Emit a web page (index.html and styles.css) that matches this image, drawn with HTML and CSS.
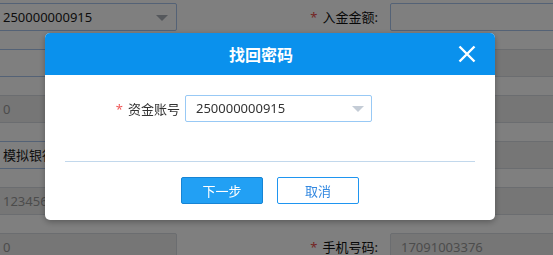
FILE: index.html
```html
<!DOCTYPE html>
<html lang="zh-CN">
<head>
<meta charset="utf-8">
<title>找回密码</title>
<link rel="stylesheet" href="styles.css">
</head>
<body>
<div class="page">
  <div class="row">
    <div class="field select">250000000915<span class="caret"></span></div>
    <div class="label"><span class="req">*</span>入金金额:</div>
    <div class="field"></div>
  </div>
  <div class="row">
    <div class="field"></div>
    <div class="label"></div>
    <div class="field disabled"></div>
  </div>
  <div class="row">
    <div class="field disabled">0</div>
    <div class="label"></div>
    <div class="field disabled"></div>
  </div>
  <div class="row">
    <div class="field dark">模拟银行</div>
    <div class="label"></div>
    <div class="field disabled"></div>
  </div>
  <div class="row">
    <div class="field disabled">1234567890</div>
    <div class="label"></div>
    <div class="field disabled"></div>
  </div>
  <div class="row">
    <div class="field disabled">0</div>
    <div class="label"><span class="req">*</span>手机号码:</div>
    <div class="field disabled">17091003376</div>
  </div>
</div>

<div class="mask">
  <div class="dialog">
    <div class="dialog-head">
      <span class="dialog-title">找回密码</span>
      <span class="close">
        <svg width="18" height="18" viewBox="0 0 18 18"><path d="M1.5 1.5 L16.5 16.5 M16.5 1.5 L1.5 16.5" stroke="#fff" stroke-width="2.4" fill="none"/></svg>
      </span>
    </div>
    <div class="dialog-body">
      <div class="form-row">
        <label class="form-label"><span class="req">*</span>资金账号</label>
        <div class="combo">250000000915<span class="combo-caret"></span></div>
      </div>
    </div>
    <div class="divider"></div>
    <div class="actions">
      <button class="btn primary">下一步</button>
      <button class="btn ghost">取消</button>
    </div>
  </div>
</div>
</body>
</html>
```

FILE: styles.css
```css
html, body {
  margin: 0;
  padding: 0;
  width: 553px;
  height: 255px;
  overflow: hidden;
  background: #fff;
  font-family: "Noto Sans", "Noto Sans CJK SC", sans-serif;
  font-size: 13px;
  color: #333;
}

.page {
  display: flex;
  flex-direction: column;
  gap: 18px;
  padding-top: 3px;
  margin-left: -8px;
}

.row {
  display: grid;
  grid-template-columns: 185px 213px 180px;
  height: 28px;
}

.field {
  box-sizing: border-box;
  height: 28px;
  border: 1px solid #a8c4ec;
  border-radius: 2px;
  padding: 0 10px;
  line-height: 26px;
  background: #fff;
  color: #999;
  white-space: nowrap;
  overflow: hidden;
  position: relative;
}

.field.select, .field.dark { color: #1a1a1a; }

.field.disabled {
  background: #ececec;
  border-color: #d6dae0;
}

.caret {
  position: absolute;
  right: 8px;
  top: 11px;
  border-left: 6px solid transparent;
  border-right: 6px solid transparent;
  border-top: 6px solid #aab0b8;
}

.label {
  text-align: right;
  padding-right: 12px;
  line-height: 28px;
  color: #111;
}

.req {
  color: #e84a4a;
  margin-right: 5px;
}

.mask {
  position: fixed;
  inset: 0;
  background: rgba(0, 0, 0, 0.5);
}

.dialog {
  position: absolute;
  left: 45px;
  top: 33px;
  width: 450px;
  height: 187px;
  background: #fff;
  border-radius: 5px;
  overflow: hidden;
  box-shadow: 0 2px 6px rgba(0, 0, 0, 0.3);
  display: flex;
  flex-direction: column;
}

.dialog-head {
  height: 42px;
  flex: none;
  background: #0a91ed;
  display: flex;
  align-items: center;
  justify-content: center;
  padding-right: 18px;
  position: relative;
}

.dialog-title {
  color: #fff;
  font-size: 16px;
  font-weight: bold;
}

.close {
  position: absolute;
  right: 19px;
  top: 12px;
  width: 18px;
  height: 18px;
  display: flex;
}

.dialog-body {
  padding: 20px 0 0;
  height: 86px;
  flex: none;
  box-sizing: border-box;
}

.form-row {
  display: flex;
  align-items: center;
  height: 27px;
}

.form-label {
  width: 135px;
  text-align: right;
  color: #333;
}

.form-label .req {
  margin-right: 5px;
  color: #f05858;
}

.combo {
  box-sizing: border-box;
  margin-left: 5px;
  width: 187px;
  height: 27px;
  border: 1px solid #98c9f5;
  border-radius: 2px;
  padding-left: 10px;
  line-height: 25px;
  color: #333;
  position: relative;
}

.combo-caret {
  position: absolute;
  right: 7px;
  top: 10px;
  border-left: 6px solid transparent;
  border-right: 6px solid transparent;
  border-top: 6px solid #c4ccd6;
}

.divider {
  margin: 0 20px;
  height: 1px;
  flex: none;
  background: #c2d8ec;
}

.actions {
  display: flex;
  justify-content: center;
  gap: 14px;
  padding-top: 15px;
}

.btn {
  box-sizing: border-box;
  width: 82px;
  height: 27px;
  border-radius: 2px;
  font-family: "Noto Sans", "Noto Sans CJK SC", sans-serif;
  font-size: 13px;
  padding: 0;
  cursor: pointer;
}

.btn.primary {
  background: #22a0f4;
  border: 1px solid #1784d4;
  color: #fff;
}

.btn.ghost {
  background: #fff;
  border: 1px solid #1f95f0;
  color: #3388e0;
}
```
